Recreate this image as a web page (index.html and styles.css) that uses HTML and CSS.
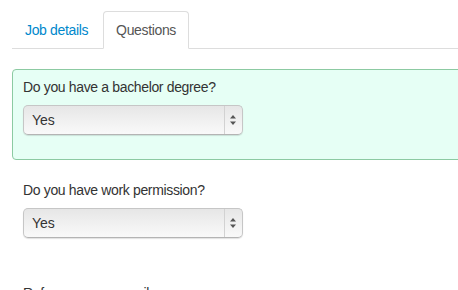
FILE: index.html
```html
<!DOCTYPE html>
<html>
<head>
<meta charset="utf-8">
<title>Job questions</title>
<link rel="stylesheet" href="styles.css">
</head>
<body>
<div class="page">
	<ul class="tabs">
		<li><a href="#">Job details</a></li>
		<li class="active"><a href="#">Questions</a></li>
	</ul>

	<form class="questions">
		<div class="question highlight">
			<label>Do you have a bachelor degree?</label>
			<div class="select-wrap">
				<select><option>Yes</option><option>No</option></select>
				<svg class="arrows" width="6" height="10" viewBox="0 0 6 10"><path d="M3 0L6 3.5H0Z M3 10L6 6.5H0Z" fill="#555"/></svg>
			</div>
		</div>
		<div class="question">
			<label>Do you have work permission?</label>
			<div class="select-wrap">
				<select><option>Yes</option><option>No</option></select>
				<svg class="arrows" width="6" height="10" viewBox="0 0 6 10"><path d="M3 0L6 3.5H0Z M3 10L6 6.5H0Z" fill="#555"/></svg>
			</div>
		</div>
		<div class="question">
			<label>Reference your email</label>
			<input type="text" class="text">
		</div>
	</form>
</div>
</body>
</html>
```

FILE: styles.css
```css
html, body{
margin: 0;
overflow: hidden;
background: #fff;
}
.page{
font-family: "Liberation Sans", Arial, sans-serif;
font-size: 14px;
line-height: 20px;
color: #333;
padding: 11px 0 0 12px;
width: 560px;
}

/* tabs */
.tabs{
list-style: none;
margin: 0 0 20px;
padding: 0;
display: flex;
border-bottom: 1px solid #ddd;
}
.tabs li{
margin-bottom: -1px;
}
.tabs a{
display: block;
padding: 8px 12px;
margin-right: 2px;
border: 1px solid transparent;
border-radius: 4px 4px 0 0;
color: #0088cc;
text-decoration: none;
letter-spacing: -0.35px;
}
.tabs .active a{
color: #555;
background: #fff;
border-color: #ddd #ddd transparent;
}

/* questions */
.question{
border: 1px solid transparent;
border-radius: 4px;
padding: 7px 10px 24px;
margin-bottom: 12px;
}
.question.highlight{
background: #e6fff5;
border-color: #8ccaa2;
}
.question label{
display: block;
margin-bottom: 8px;
letter-spacing: -0.35px;
}
.select-wrap{
position: relative;
width: 220px;
height: 30px;
}
.select-wrap select{
-webkit-appearance: none;
appearance: none;
width: 220px;
height: 30px;
margin: 0;
padding: 0 24px 0 8px;
font-family: inherit;
font-size: 14px;
color: #333;
border: 1px solid #c6c6c6;
border-bottom-color: #b4b4b4;
border-radius: 5px;
background: linear-gradient(to bottom, #e6e6e6 0%, #efefef 45%, #f9f9f9 100%);
box-shadow: 0 1px 1px rgba(0,0,0,0.12);
}
.select-wrap::after{
content: "";
position: absolute;
top: 1px;
bottom: 1px;
left: 201px;
border-left: 1px solid #d2d2d2;
}
.select-wrap .arrows{
position: absolute;
left: 207px;
top: 10px;
pointer-events: none;
}
.question .text{
width: 206px;
height: 20px;
padding: 4px 6px;
border: 1px solid #ccc;
border-radius: 4px;
font-family: inherit;
font-size: 14px;
}
```
